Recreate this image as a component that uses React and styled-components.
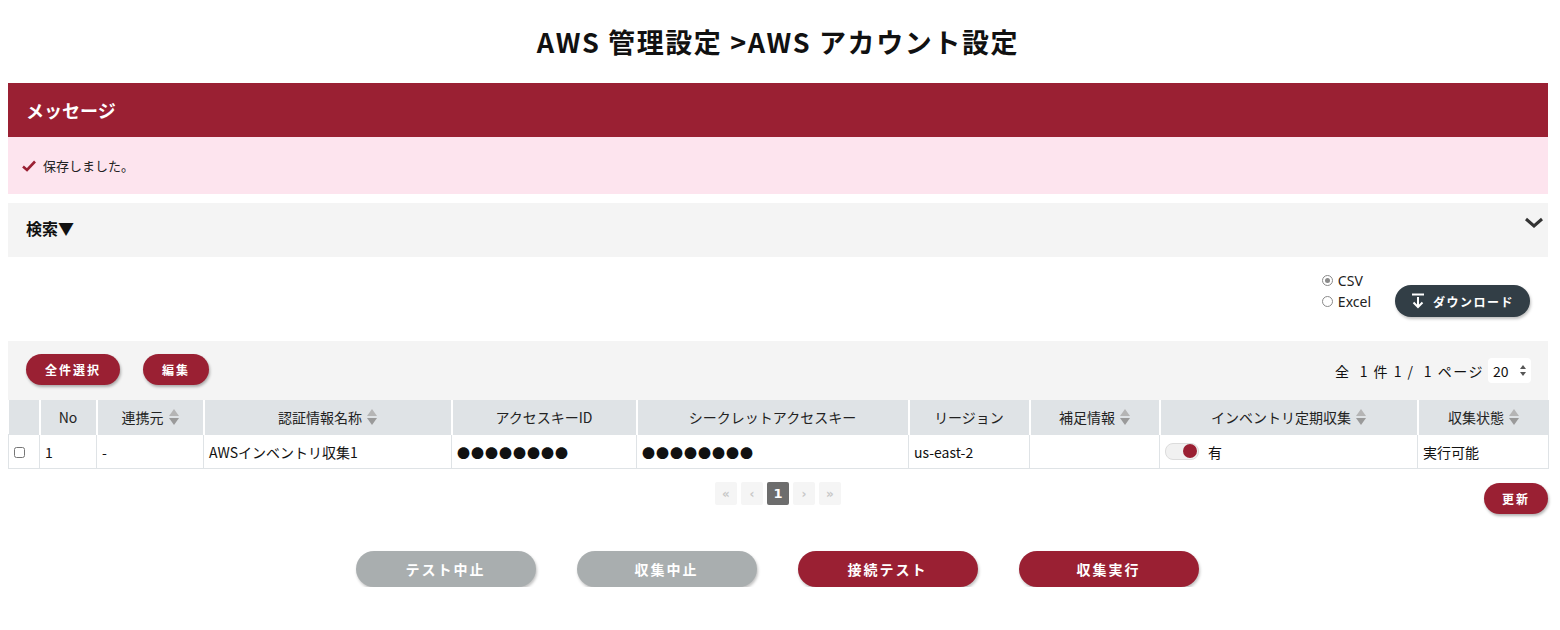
import React, { Component } from "react";
import styled, { createGlobalStyle } from "styled-components";

const GlobalStyle = createGlobalStyle`
  body {
    margin: 0;
    background: #fff;
    font-family: "Noto Sans CJK JP", "Noto Sans", sans-serif;
    color: #222;
  }
`;

const Page = styled.div`
  padding: 0 8px 0 8px;
  width: 1540px;
`;

const Title = styled.h1`
  margin: 0;
  height: 83px;
  display: flex;
  align-items: center;
  justify-content: center;
  font-size: 27px;
  letter-spacing: 1.6px;
  font-weight: bold;
  color: #111;
`;

const MessageHead = styled.div`
  background: #9a2033;
  color: #fff;
  height: 54px;
  display: flex;
  align-items: center;
  padding-left: 18px;
  font-size: 18px;
  font-weight: bold;
`;

const MessageBody = styled.div`
  background: #fde4ee;
  height: 57px;
  display: flex;
  align-items: center;
  padding-left: 14px;
  gap: 7px;
  font-size: 13px;
  color: #222;
`;

const SearchBar = styled.div`
  margin-top: 9px;
  background: #f4f4f4;
  height: 54px;
  box-sizing: border-box;
  display: flex;
  align-items: center;
  justify-content: space-between;
  padding: 0 4px 4px 18px;
  font-size: 16px;
  font-weight: bold;
  color: #111;
  svg {
    margin-top: -10px;
  }
`;

const ExportRow = styled.div`
  display: flex;
  justify-content: flex-end;
  align-items: center;
  gap: 24px;
  height: 84px;
  padding-right: 18px;
`;

const RadioGroup = styled.div`
  display: flex;
  flex-direction: column;
  gap: 4px;
  margin-top: -17px;
  font-size: 14px;
  font-family: "Noto Sans", sans-serif;
`;

const RadioLabel = styled.label`
  display: flex;
  align-items: center;
  gap: 5px;
  height: 17px;
  color: #222;
`;

const RadioDot = styled.span`
  width: 9px;
  height: 9px;
  border-radius: 50%;
  border: 1px solid #8a8a8a;
  background: #fff;
  display: inline-flex;
  align-items: center;
  justify-content: center;
  &::after {
    content: "";
    width: 5px;
    height: 5px;
    border-radius: 50%;
    background: ${p => (p.checked ? "#8a8a8a" : "transparent")};
  }
`;

const DarkButton = styled.button`
  height: 32px;
  width: 135px;
  border: none;
  border-radius: 16px;
  background: #323e46;
  color: #fff;
  font-family: inherit;
  font-size: 12px;
  font-weight: bold;
  letter-spacing: 1.5px;
  display: flex;
  align-items: center;
  justify-content: center;
  gap: 8px;
  margin-top: 4px;
  box-shadow: 1px 2px 3px rgba(0, 0, 0, 0.25);
`;

const Toolbar = styled.div`
  background: #f4f4f4;
  height: 59px;
  display: flex;
  align-items: center;
  justify-content: space-between;
  padding: 0 17px 0 18px;
`;

const ButtonGroup = styled.div`
  display: flex;
  gap: 23px;
  margin-top: -3px;
`;

const RedPill = styled.button`
  height: 31px;
  padding: 0 ${p => p.pad || 17}px;
  border: none;
  border-radius: 16px;
  background: #9a2033;
  color: #fff;
  font-family: inherit;
  font-size: 12px;
  font-weight: bold;
  letter-spacing: 2px;
  box-shadow: 1px 2px 3px rgba(0, 0, 0, 0.3);
`;

const PagerInfo = styled.div`
  display: flex;
  align-items: center;
  gap: 4px;
  font-size: 14px;
  letter-spacing: 1.5px;
  white-space: pre;
  color: #111;
`;

const PerPage = styled.div`
  width: 43px;
  height: 25px;
  background: #fff;
  border-radius: 4px;
  display: flex;
  align-items: center;
  justify-content: space-between;
  padding: 0 5px;
  box-sizing: border-box;
  font-size: 14px;
  letter-spacing: 0;
`;

const Table = styled.table`
  width: 1540px;
  border-collapse: collapse;
  font-size: 14px;
  table-layout: fixed;
`;

const Th = styled.th`
  background: #dfe3e6;
  height: 34px;
  font-weight: normal;
  color: #222;
  border-left: 2px solid #fff;
  padding: 0;
  text-align: center;
  &:first-child {
    border-left: none;
  }
`;

const Td = styled.td`
  height: 33px;
  padding: 0 5px;
  border: 1px solid #dfe3e6;
  color: #111;
  white-space: nowrap;
`;

const Dots = styled.span`
  font-size: 13px;
  letter-spacing: 1px;
`;

const HeadInner = styled.span`
  display: inline-flex;
  align-items: center;
  gap: 5px;
`;

const Toggle = styled.span`
  display: inline-block;
  position: relative;
  width: 32px;
  height: 15px;
  border-radius: 8px;
  background: #f1f1f1;
  border: 1px solid #dcdcdc;
  vertical-align: middle;
  margin-right: 9px;
  margin-top: -4px;
  &::after {
    content: "";
    position: absolute;
    right: 1px;
    top: 0px;
    width: 14px;
    height: 14px;
    border-radius: 50%;
    background: #9a2033;
  }
`;

const Below = styled.div`
  display: grid;
  grid-template-columns: 1fr auto 1fr;
  align-items: start;
  padding-top: 14px;
  height: 68px;
`;

const Pagination = styled.div`
  grid-column: 2;
  display: flex;
  gap: 4px;
  margin-top: -1px;
`;

const PageBtn = styled.span`
  width: 22px;
  height: 23px;
  border-radius: 2px;
  background: ${p => (p.active ? "#6d6d6d" : "#f5f5f5")};
  color: ${p => (p.active ? "#fff" : "#c8c8c8")};
  font-size: ${p => (p.active ? 13 : 12)}px;
  font-weight: bold;
  display: flex;
  align-items: center;
  justify-content: center;
  font-family: "DejaVu Sans", sans-serif;
`;

const RefreshWrap = styled.div`
  grid-column: 3;
  display: flex;
  justify-content: flex-end;
`;

const Actions = styled.div`
  display: flex;
  justify-content: center;
  gap: 41px;
  padding-right: 2px;
`;

const ActionButton = styled.button`
  width: 180px;
  height: 36px;
  border: none;
  border-radius: 18px;
  background: ${p => (p.disabled ? "#a9aeaf" : "#9a2033")};
  color: #fff;
  font-family: inherit;
  font-size: 14px;
  font-weight: bold;
  letter-spacing: 2px;
  box-shadow: 1px 2px 3px rgba(0, 0, 0, 0.25);
`;

const SortIcon = () => (
  <svg width="10" height="18" viewBox="0 0 10 18">
    <polygon points="5,1 10,8 0,8" fill="#b5b5b5" />
    <polygon points="5,17 10,10 0,10" fill="#9a9a9a" />
  </svg>
);

const Head = ({ label, sort }) => (
  <HeadInner>
    {label}
    {sort && <SortIcon />}
  </HeadInner>
);

const columns = [
  { w: 31, label: "" },
  { w: 57, label: "No" },
  { w: 107, label: "連携元", sort: true },
  { w: 248, label: "認証情報名称", sort: true },
  { w: 185, label: "アクセスキーID" },
  { w: 272, label: "シークレットアクセスキー" },
  { w: 121, label: "リージョン" },
  { w: 130, label: "補足情報", sort: true },
  { w: 258, label: "インベントリ定期収集", sort: true },
  { w: 131, label: "収集状態", sort: true }
];

class App extends Component {
  render() {
    return (
      <Page>
        <GlobalStyle />
        <Title>AWS 管理設定 &gt;AWS アカウント設定</Title>

        <MessageHead>メッセージ</MessageHead>
        <MessageBody>
          <svg width="14" height="12" viewBox="0 0 14 12">
            <path d="M1 6.5 L5 10 L13 1.5" stroke="#9a2033" strokeWidth="2.6" fill="none" />
          </svg>
          保存しました。
        </MessageBody>

        <SearchBar>
          <span>検索▼</span>
          <svg width="20" height="12" viewBox="0 0 20 12">
            <path d="M2 2 L10 9 L18 2" stroke="#333" strokeWidth="3" fill="none" />
          </svg>
        </SearchBar>

        <ExportRow>
          <RadioGroup>
            <RadioLabel>
              <RadioDot checked />
              CSV
            </RadioLabel>
            <RadioLabel>
              <RadioDot />
              Excel
            </RadioLabel>
          </RadioGroup>
          <DarkButton>
            <svg width="14" height="16" viewBox="0 0 14 16">
              <path d="M1 1.5 H13 M7 4 V14 M2.5 9.5 L7 14 L11.5 9.5" stroke="#fff" strokeWidth="2" fill="none" />
            </svg>
            ダウンロード
          </DarkButton>
        </ExportRow>

        <Toolbar>
          <ButtonGroup>
            <RedPill pad={19}>全件選択</RedPill>
            <RedPill pad={19}>編集</RedPill>
          </ButtonGroup>
          <PagerInfo>
            {"全  1 件 1 /  1 ページ"}
            <PerPage>
              20
              <svg width="6" height="11" viewBox="0 0 6 11">
                <polygon points="3,0 6,4 0,4" fill="#555" />
                <polygon points="3,11 6,7 0,7" fill="#555" />
              </svg>
            </PerPage>
          </PagerInfo>
        </Toolbar>

        <Table>
          <colgroup>
            {columns.map((c, i) => (
              <col key={i} style={{ width: c.w }} />
            ))}
          </colgroup>
          <thead>
            <tr>
              {columns.map((c, i) => (
                <Th key={i}>
                  <Head label={c.label} sort={c.sort} />
                </Th>
              ))}
            </tr>
          </thead>
          <tbody>
            <tr>
              <Td>
                <input type="checkbox" style={{ margin: 0, width: 11, height: 11 }} />
              </Td>
              <Td>1</Td>
              <Td>-</Td>
              <Td>AWSインベントリ収集1</Td>
              <Td>
                <Dots>●●●●●●●●</Dots>
              </Td>
              <Td>
                <Dots>●●●●●●●●</Dots>
              </Td>
              <Td>us-east-2</Td>
              <Td />
              <Td>
                <Toggle />
                有
              </Td>
              <Td>実行可能</Td>
            </tr>
          </tbody>
        </Table>

        <Below>
          <Pagination>
            <PageBtn>«</PageBtn>
            <PageBtn>‹</PageBtn>
            <PageBtn active>1</PageBtn>
            <PageBtn>›</PageBtn>
            <PageBtn>»</PageBtn>
          </Pagination>
          <RefreshWrap>
            <RedPill pad={18}>更新</RedPill>
          </RefreshWrap>
        </Below>

        <Actions>
          <ActionButton disabled>テスト中止</ActionButton>
          <ActionButton disabled>収集中止</ActionButton>
          <ActionButton>接続テスト</ActionButton>
          <ActionButton>収集実行</ActionButton>
        </Actions>
      </Page>
    );
  }
}

export default App;
